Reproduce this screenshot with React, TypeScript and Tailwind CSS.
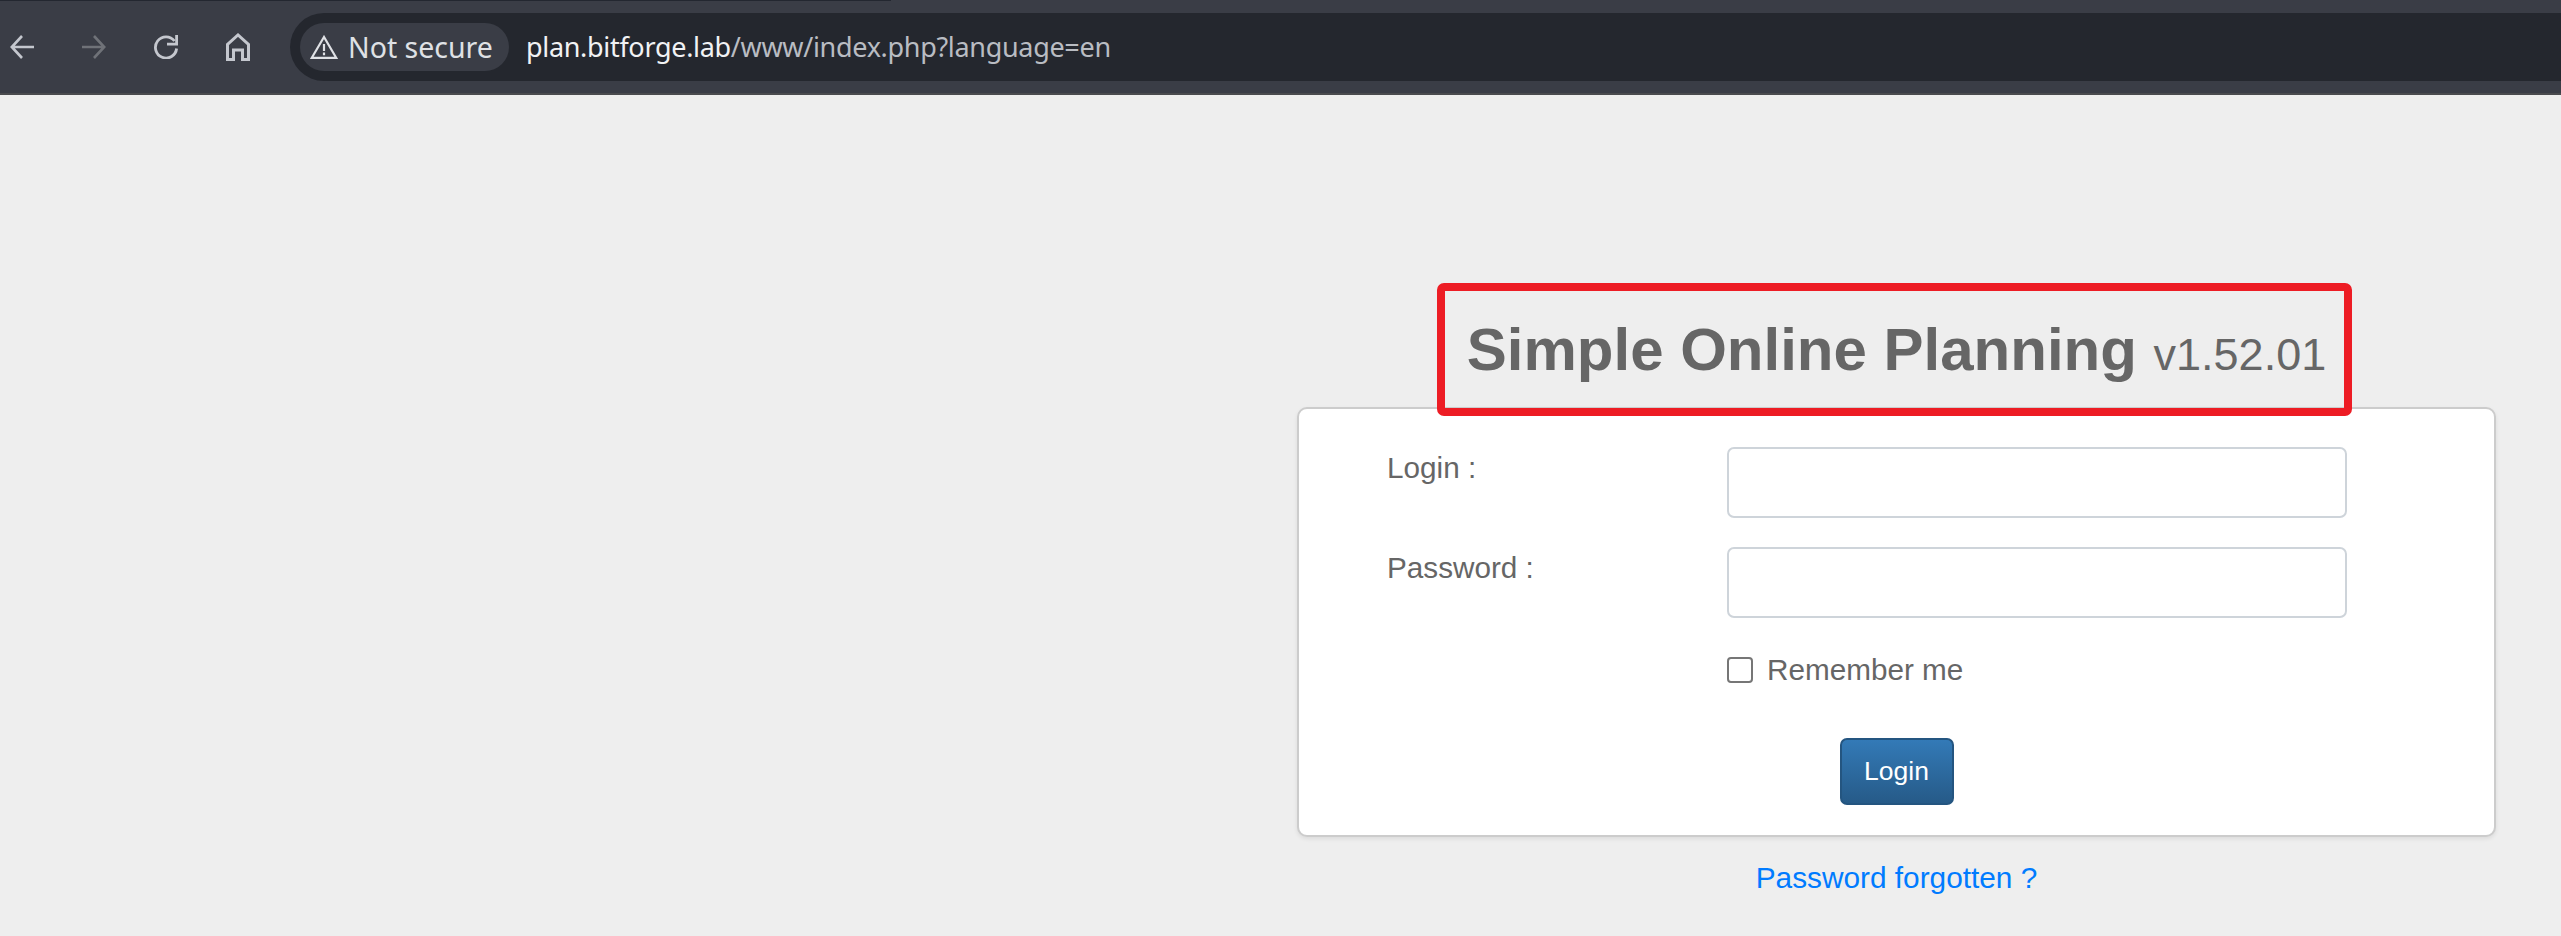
const uiFont = "font-['Noto_Sans',sans-serif]";

function BackIcon() {
  return (
    <svg width="24" height="24" viewBox="0 0 24 24" fill="none" stroke="#c4c7ce" strokeWidth="2.6">
      <path d="M24 12H2M12 1 1.8 12 12 23" />
    </svg>
  );
}

function ForwardIcon() {
  return (
    <svg width="24" height="24" viewBox="0 0 24 24" fill="none" stroke="#6f7278" strokeWidth="2.6">
      <path d="M0 12h22M12 1l10.2 11L12 23" />
    </svg>
  );
}

function ReloadIcon() {
  return (
    <svg width="24" height="24" viewBox="0 0 24 24" fill="none" stroke="#c4c7ce" strokeWidth="2.8">
      <path d="M20.5 6A10.6 10.6 0 1 0 22.6 13.5" />
      <path d="M22.6 0v9.2h-9.6" />
    </svg>
  );
}

function HomeIcon() {
  return (
    <svg width="24" height="28" viewBox="0 0 24 28" fill="none" stroke="#c4c7ce" strokeWidth="3">
      <path d="M1.5 26.5V11.5L12 2l10.5 9.5v15h-6V17h-9v9.5z" />
    </svg>
  );
}

function WarningIcon() {
  return (
    <svg width="28" height="24" viewBox="0 0 28 24" fill="none">
      <path d="M14 2 1.8 22.8h24.4z" stroke="#dfe1e5" strokeWidth="2.2" />
      <path d="M14 9v7M14 17.6v2.6" stroke="#dfe1e5" strokeWidth="2.2" />
    </svg>
  );
}

function Toolbar() {
  return (
    <header className="w-full">
      <div className="h-px bg-[#3a3d46]">
        <div className="h-px w-[891px] bg-[#232730]" />
      </div>
      <div className="flex h-[92px] items-center bg-[#3a3d46]">
        <div className="flex w-[290px] items-center pl-[10px]">
          <div className="flex w-[72px]"><BackIcon /></div>
          <div className="flex w-[72px]"><ForwardIcon /></div>
          <div className="flex w-[72px]"><ReloadIcon /></div>
          <div className="flex w-[24px]"><HomeIcon /></div>
        </div>
        <div className="flex h-[68px] flex-1 items-center rounded-l-[34px] bg-[#24272e] pl-[10px]">
          <div className={`flex h-[48px] w-[209px] items-center gap-[10px] rounded-[24px] bg-[#3a3d46] pl-[10px] text-[28.5px] text-[#dfe1e5] ${uiFont}`}>
            <WarningIcon />
            <span>Not secure</span>
          </div>
          <div className={`ml-[17px] text-[27px] tracking-[-0.32px] text-[#b9bcc2] ${uiFont}`}>
            <span className="text-[#f1f2f4]">plan.bitforge.lab</span>/www/index.php?language=en
          </div>
        </div>
      </div>
      <div className="h-[2px] bg-[#4a4b4e]" />
    </header>
  );
}

function Field({ label }: { label: string }) {
  return (
    <div className="mb-[29px] grid grid-cols-[340px_620px]">
      <label className="pt-px leading-[40px]">{label}</label>
      <input className="h-[71px] rounded-[7px] border-2 border-[#ced4da] bg-white" />
    </div>
  );
}

export default function App() {
  return (
    <div className="relative min-h-[936px] overflow-hidden bg-[#eeeeee] font-['Liberation_Sans',sans-serif] text-[29.7px] text-[#666666]">
      <Toolbar />
      <main className="ml-[1297px] w-[1199px] pt-[225px]">
        <h1 className="h-[87px] text-center text-[60px] leading-[60px] font-bold">
          Simple Online Planning <small className="text-[45px] leading-none font-normal">v1.52.01</small>
        </h1>
        <div className="h-[430px] rounded-[10px] border-2 border-[#cccccc] bg-white pt-[38px] shadow-[0_2px_4px_rgba(0,0,0,0.08)]">
          <div className="pl-[88px]">
            <Field label="Login :" />
            <Field label="Password :" />
            <div className="flex items-center pt-[3px] pl-[340px] leading-[40px]">
              <input type="checkbox" className="h-[26px] w-[26px] appearance-none rounded-[4px] border-2 border-[#767676] bg-white" />
              <label className="ml-[14px]">Remember me</label>
            </div>
          </div>
          <div className="mt-[48px] flex justify-center">
            <button className="h-[67px] w-[114px] rounded-[7px] border-2 border-[#245580] bg-gradient-to-b from-[#337ab7] to-[#265a88] text-[26.5px] text-white">
              Login
            </button>
          </div>
        </div>
        <div className="mt-[19px] text-center">
          <a href="#" className="text-[29.8px] text-[#007bff]">Password forgotten ?</a>
        </div>
      </main>
      <div className="pointer-events-none absolute top-[283px] left-[1437px] h-[133px] w-[915px] rounded-[7px] border-8 border-[#ed1c24]" />
    </div>
  );
}
